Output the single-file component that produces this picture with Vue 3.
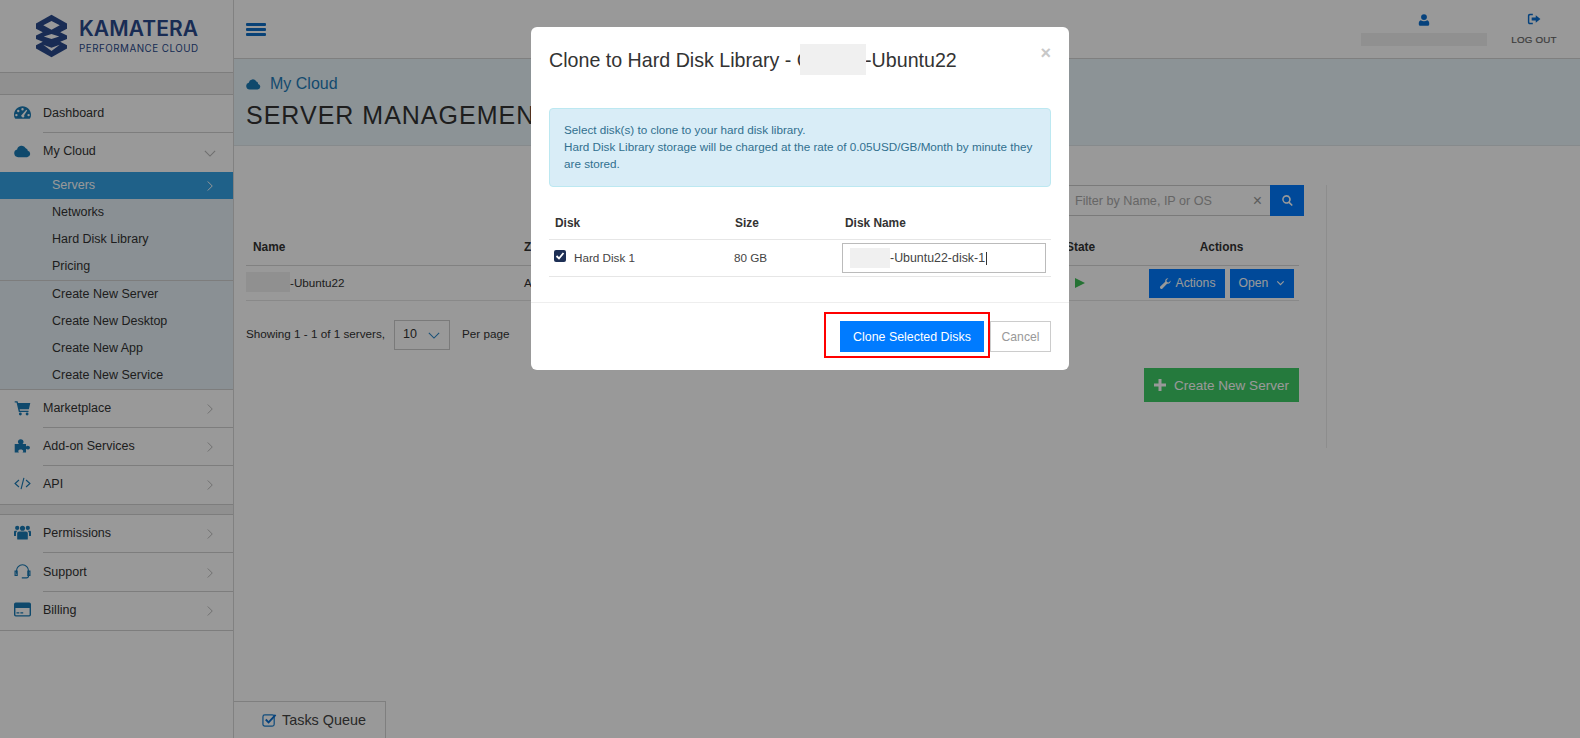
<script setup>
const icons = {
  gauge: 'M12 3C5.400 3 0 8.400 0 15c0 1.900.400 3.600 1.200 5.200.2.400.5.600.9.600h19.800c.4 0 .7-.2.9-.6.8-1.600 1.200-3.300 1.200-5.200C24 8.400 18.600 3 12 3zM12 5.800a1.700 1.700 0 1 1 0 3.400 1.700 1.700 0 0 1 0-3.400zM6 8.200a1.700 1.700 0 1 1 0 3.400 1.700 1.700 0 0 1 0-3.400zM3.400 14a1.700 1.700 0 1 1 0 3.400 1.700 1.700 0 0 1 0-3.400zM20.600 14a1.700 1.700 0 1 1 0 3.400 1.700 1.700 0 0 1 0-3.400zM17.400 8.200l1.300.8-4.400 6.800c.5.800.5 1.700 0 2.400a2.300 2.300 0 1 1-2.900-3.500z',
  cloud: 'M6 20a5.500 5.500 0 0 1-1.600-10.800A6.500 6.500 0 0 1 16.600 7.300 4 4 0 0 1 19.500 11 4.600 4.600 0 0 1 18.500 20z',
  cart: 'M1 3h4l.8 2.500H23l-2 9H8l.4 2h12.100v2H6.800L3.600 5H1zM9 19.200a2 2 0 1 1 0 4 2 2 0 0 1 0-4zM18.500 19.200a2 2 0 1 1 0 4 2 2 0 0 1 0-4z',
  puzzle: 'M1 10h6c-1-1-1.500-2-1.500-3.200C5.500 4.700 7 3 9.500 3S13.500 4.700 13.500 6.800c0 1.200-.5 2.200-1.500 3.200h5v3.500c.8-.7 1.500-1 2.300-1 1.600 0 3.200 1 3.200 2.500s-1.600 2.500-3.200 2.500c-.8 0-1.500-.3-2.300-1V22H12c.7-.8 1-1.500 1-2.300 0-1.200-1.500-2.200-3.500-2.200S6 18.500 6 19.700c0 .8.300 1.500 1 2.300H1z',
  users: 'M12 2.500a3.600 3.600 0 1 1 0 7.200 3.600 3.600 0 0 1 0-7.200zM4.500 2.500a3 3 0 1 1 0 6 3 3 0 0 1 0-6zM19.500 2.500a3 3 0 1 1 0 6 3 3 0 0 1 0-6zM7.300 10.500h9.400c1.800 0 2.800 1.200 2.800 3V21c0 .6-.4 1-1 1H5.500c-.6 0-1-.4-1-1v-7.500c0-1.800 1-3 2.800-3zM0 11.500c0-1 .8-1.800 1.800-1.800h3.400c-1.300.8-2.400 2-2.400 3.800v3.500H.8c-.5 0-.8-.3-.8-.8zM24 11.500c0-1-.8-1.800-1.800-1.800h-3.400c1.300.8 2.400 2 2.400 3.800v3.500h2c.5 0 .8-.3.8-.8z',
  user: 'M12 2a5 5 0 1 1 0 10 5 5 0 0 1 0-10zM6.500 12.500c1.500 1.200 3.500 1.800 5.500 1.800s4-.6 5.500-1.800c2.500.5 3.500 3 3.500 6.200 0 2-1.200 3.300-3.200 3.300H6.200C4.200 22 3 20.700 3 18.700c0-3.200 1-5.700 3.500-6.200z',
  logout: 'M10 3v2.500H5.500c-1 0-1.500.6-1.500 1.500v10c0 .9.500 1.500 1.500 1.500H10V21H5C2.800 21 1.500 19.700 1.500 17.500v-11C1.500 4.300 2.800 3 5 3zM15 5.500l8 6.500-8 6.500v-4H8v-5h7z',
  wrench: 'M21.500 6.500c.4 3.500-2.700 6.800-6.600 5.800L6.500 21c-1.200 1.200-3 1.200-4 .2-1-1-1-2.700.2-3.900l8.800-8.400C10.600 5 13.800 1.900 17.300 2.300l-3.500 3.500.7 3.500 3.500.7z',
  search: 'M10 2a8 8 0 0 1 6.400 12.800l5.400 5.400-2.100 2.100-5.400-5.400A8 8 0 1 1 10 2zm0 3a5 5 0 1 0 0 10 5 5 0 0 0 0-10z'
}
const subA = ['Servers', 'Networks', 'Hard Disk Library', 'Pricing']
const subB = ['Create New Server', 'Create New Desktop', 'Create New App', 'Create New Service']
const blockB = [
  { label: 'Marketplace', icon: 'cart' },
  { label: 'Add-on Services', icon: 'puzzle' },
  { label: 'API', icon: 'code' }
]
const blockC = [
  { label: 'Permissions', icon: 'users' },
  { label: 'Support', icon: 'headset' },
  { label: 'Billing', icon: 'card' }
]
</script>

<template>
  <div class="page">
    <aside class="sidebar">
      <div class="logo">
        <svg class="logo-mark" viewBox="0 0 32 44">
          <path class="hex" d="M16 0 32 9v26L16 44 0 35V9z" />
          <path class="gap" d="M16 6.500 24.500 11 16 15.500 7.500 11zM8 22.500 16 20l8 2.500-8 2.500zM7.500 31 16 34l8.500-3L16 37.500zM0 14.500 7 18l-7 3.500zM32 14.500 25 18l7 3.500zM0 25 7 28l-7 3.500zM32 25l-7 3 7 3.500z" />
        </svg>
        <div class="logo-text">
          <div class="logo-name">KAMATERA</div>
          <div class="logo-sub">PERFORMANCE CLOUD</div>
        </div>
      </div>
      <div class="side-gap"></div>

      <a class="item lined">
        <svg class="ico" viewBox="0 0 24 24"><path fill-rule="evenodd" :d="icons.gauge" /></svg>
        <span>Dashboard</span>
      </a>
      <a class="item open">
        <svg class="ico" viewBox="0 0 24 24"><path :d="icons.cloud" /></svg>
        <span>My Cloud</span>
        <svg class="chev down" viewBox="0 0 14 8"><path d="M1 1l6 6 6-6" /></svg>
      </a>
      <div class="sub">
        <a v-for="(s, i) in subA" :key="s" class="sub-item" :class="{ active: i === 0 }">
          {{ s }}
          <svg v-if="i === 0" class="chev light" viewBox="0 0 8 14"><path d="M1 1l6 6-6 6" /></svg>
        </a>
      </div>
      <div class="sub">
        <a v-for="s in subB" :key="s" class="sub-item">{{ s }}</a>
      </div>

      <a v-for="(m, i) in blockB" :key="m.label" class="item" :class="{ lined: i < 2, 'last-a': i === 2 }">
        <svg v-if="m.icon === 'code'" class="ico stroke" viewBox="0 0 24 24"><path d="M7 7l-5.500 5L7 17M17 7l5.500 5L17 17M14 4l-4 16" /></svg>
        <svg v-else class="ico" viewBox="0 0 24 24"><path :d="icons[m.icon]" /></svg>
        <span>{{ m.label }}</span>
        <svg class="chev" viewBox="0 0 8 14"><path d="M1 1l6 6-6 6" /></svg>
      </a>
      <div class="side-gap small"></div>
      <a v-for="(m, i) in blockC" :key="m.label" class="item" :class="{ lined: i < 2, 'last-a': i === 2, tall: i === 1 }">
        <svg v-if="m.icon === 'headset'" class="ico stroke" viewBox="0 0 24 24"><path d="M3.500 15V11a8.500 8.500 0 0 1 17 0v7a3 3 0 0 1-3 3H11M1.500 11.500h3v6h-3zM19.500 11.500h3v6h-3z" /></svg>
        <svg v-else-if="m.icon === 'card'" class="ico" viewBox="0 0 24 24"><path fill-rule="evenodd" d="M2.500 2h19A2.500 2.500 0 0 1 24 4.500v15a2.500 2.500 0 0 1-2.500 2.500h-19A2.500 2.500 0 0 1 0 19.500v-15A2.500 2.500 0 0 1 2.500 2zM2 10v9.500c0 .3.200.5.500.5h19c.3 0 .5-.2.5-.5V10zM3.500 16h4v1.500h-4zM9 16h4v1.500H9z" /></svg>
        <svg v-else class="ico" viewBox="0 0 24 24"><path :d="icons[m.icon]" /></svg>
        <span>{{ m.label }}</span>
        <svg class="chev" viewBox="0 0 8 14"><path d="M1 1l6 6-6 6" /></svg>
      </a>
    </aside>

    <main class="main">
      <header class="topbar">
        <div class="burger"><i></i><i></i><i></i></div>
        <div class="top-right">
          <div class="account">
            <svg class="top-ico" viewBox="0 0 24 24"><path :d="icons.user" /></svg>
            <span class="blur account-blur"></span>
          </div>
          <div class="logout">
            <svg class="top-ico" viewBox="0 0 24 24"><path :d="icons.logout" /></svg>
            <span>LOG OUT</span>
          </div>
        </div>
      </header>

      <section class="band">
        <div class="crumb">
          <svg viewBox="0 0 24 24"><path :d="icons.cloud" /></svg>
          <span>My Cloud</span>
        </div>
        <h1>SERVER MANAGEMENT</h1>
      </section>

      <section class="workspace">
        <div class="toolbar">
          <div class="filter">
            <span class="placeholder">Filter by Name, IP or OS</span>
            <span class="clear">×</span>
          </div>
          <button class="search-btn">
            <svg viewBox="0 0 24 24"><path :d="icons.search" /></svg>
          </button>
        </div>

        <div class="grid head">
          <div class="c-name">Name</div>
          <div class="c-zone">Zone</div>
          <div class="c-state">State</div>
          <div class="c-actions center">Actions</div>
        </div>
        <div class="grid row">
          <div class="c-name plain"><span class="blur name-blur"></span>-Ubuntu22</div>
          <div class="c-zone plain">AS</div>
          <div class="c-state"><i class="play"></i></div>
          <div class="c-actions btns">
            <button class="btn-blue act">
              <svg viewBox="0 0 24 24"><path :d="icons.wrench" /></svg>
              Actions
            </button>
            <button class="btn-blue opn">
              Open
              <svg viewBox="0 0 14 8"><path d="M2 1.500l5 5 5-5" /></svg>
            </button>
          </div>
        </div>

        <div class="pager">
          <span>Showing 1 - 1 of 1 servers,</span>
          <div class="per">
            <span>10</span>
            <svg viewBox="0 0 14 8"><path d="M1 1l6 6 6-6" /></svg>
          </div>
          <span>Per page</span>
        </div>

        <div class="create-row">
          <button class="create">
            <svg viewBox="0 0 12 12"><path d="M4.500 0h3v4.500H12v3H7.500V12h-3V7.500H0v-3h4.500z" /></svg>
            Create New Server
          </button>
        </div>
      </section>

      <div class="tasks">
        <svg viewBox="0 0 16 16">
          <rect x="1" y="3" width="12" height="12" rx="2" class="tbox" />
          <path d="M4 8l3 3 7.500-8" class="tcheck" />
        </svg>
        <span>Tasks Queue</span>
      </div>
    </main>

    <div class="backdrop"></div>

    <div class="modal">
      <div class="modal-head">
        <h2>Clone to Hard Disk Library - G<span class="blur title-blur"></span>-Ubuntu22</h2>
        <span class="close">×</span>
      </div>
      <div class="modal-body">
        <div class="alert">
          Select disk(s) to clone to your hard disk library.<br />
          Hard Disk Library storage will be charged at the rate of 0.05USD/GB/Month by minute they are stored.
        </div>
        <div class="d-grid d-head">
          <div>Disk</div>
          <div>Size</div>
          <div>Disk Name</div>
        </div>
        <div class="d-grid d-row">
          <div class="d-disk">
            <span class="check">
              <svg viewBox="0 0 12 12"><path d="M2.500 6l2.500 2.500 4.500-5.500" /></svg>
            </span>
            Hard Disk 1
          </div>
          <div class="d-size">80 GB</div>
          <div class="d-input"><span class="blur input-blur"></span>-Ubuntu22-disk-1<i class="caret"></i></div>
        </div>
      </div>
      <div class="modal-foot">
        <div class="highlight">
          <button class="clone">Clone Selected Disks</button>
        </div>
        <button class="cancel">Cancel</button>
      </div>
    </div>
  </div>
</template>

<style>
html, body { margin: 0; background: #fff; overflow: hidden; }
</style>

<style scoped>
.page {
  display: flex;
  width: 1580px;
  height: 738px;
  overflow: hidden;
  position: relative;
  font-family: "Liberation Sans", Arial, sans-serif;
  font-size: 12.5px;
  color: #333;
  background: #fff;
}
button { font-family: inherit; cursor: pointer; }

/* sidebar */
.sidebar {
  width: 233px;
  flex: none;
  border-right: 1px solid #d8d8d8;
  display: flex;
  flex-direction: column;
  box-sizing: content-box;
}
.logo {
  height: 73px;
  border-bottom: 1px solid #d0d0d0;
  display: flex;
  align-items: flex-start;
  padding: 14px 0 0 36px;
  box-sizing: border-box;
  flex: none;
}
.logo-mark { width: 31px; height: 44px; flex: none; }
.hex { fill: #2a4a8c; }
.gap { fill: #fff; }
.logo-text { margin-left: 12px; padding-top: 5px; color: #2a4a8c; }
.logo-name { font-family: Inter, sans-serif; font-weight: 600; font-size: 21px; line-height: 20px; letter-spacing: .1px; white-space: nowrap; }
.logo-sub { font-family: Inter, sans-serif; font-size: 9.800px; line-height: 11px; margin-top: 4px; letter-spacing: .5px; white-space: nowrap; }
.side-gap { height: 22px; flex: none; box-sizing: border-box; background: #f0f0f0; border-bottom: 1px solid #d0d0d0; }
.side-gap.small { height: 10px; }
.item {
  height: 38px;
  flex: none;
  display: flex;
  align-items: center;
  padding: 0 0 2px 43px;
  position: relative;
  box-sizing: border-box;
}
.item.lined::after {
  content: "";
  position: absolute;
  left: 43px;
  right: 0;
  bottom: 0;
  height: 1px;
  background: #d0d0d0;
}
.item.open { height: 39px; padding-bottom: 4px; }
.item.tall { height: 39px; }
.item.last-a { border-bottom: 1px solid #d0d0d0; height: 39px; }
.item .ico {
  position: absolute;
  left: 13.500px;
  top: 50%;
  width: 17px;
  height: 17px;
  margin-top: -10px;
  fill: #197ab5;
}
.ico.stroke { fill: none; stroke: #197ab5; stroke-width: 1.600; }
.chev {
  position: absolute;
  right: 20px;
  top: 50%;
  width: 6px;
  height: 12px;
  margin-top: -6px;
  fill: none;
  stroke: #b8b8b8;
  stroke-width: 1.300;
}
.chev.down { width: 12px; height: 7px; right: 17px; margin-top: -3px; }
.chev.light { stroke: #fff; right: 20px; }
.sub { background: #e7f1f7; height: 109px; flex: none; box-sizing: border-box; border-bottom: 1px solid #d0d0d0; }
.sub-item {
  display: block;
  height: 27px;
  line-height: 26px;
  padding-left: 52px;
  position: relative;
}
.sub-item.active { background: #34a2e4; color: #fff; }

/* main column */
.main {
  flex: 1;
  min-width: 0;
  display: flex;
  flex-direction: column;
  height: 738px;
}
.topbar {
  height: 59px;
  flex: none;
  border-bottom: 1px solid #d4d4d4;
  box-sizing: border-box;
  display: flex;
  justify-content: space-between;
  padding-left: 12px;
}
.burger { width: 20px; padding-top: 23px; }
.burger i { display: block; height: 3px; background: #0f6fc6; margin-bottom: 2px; border-radius: 1px; }
.top-right { display: flex; }
.account {
  width: 126px;
  display: flex;
  flex-direction: column;
  align-items: center;
  padding-top: 13px;
  margin-right: 24px;
}
.top-ico { width: 14px; height: 14px; fill: #0a6fd0; display: block; }
.account-blur { display: block; width: 126px; height: 13px; margin-top: 6px; }
.logout {
  width: 46px;
  margin-right: 23px;
  display: flex;
  flex-direction: column;
  align-items: center;
  padding-top: 12px;
  font-size: 9.800px;
  letter-spacing: .2px;
  color: #666;
  -webkit-text-stroke: .2px #666;
}
.logout span { margin-top: 8px; white-space: nowrap; }
.band {
  height: 87px;
  flex: none;
  background: #e9f5fb;
  border-bottom: 1px solid #dfe6ea;
  box-sizing: border-box;
  padding: 15px 0 0 12px;
}
.crumb { display: flex; align-items: center; font-size: 16px; color: #1f7cb8; line-height: 20px; }
.crumb svg { width: 15px; height: 15px; fill: #197ab5; margin-right: 9px; }
.band h1 {
  margin: 4px 0 0;
  font-size: 25px;
  font-weight: 400;
  line-height: 34px;
  letter-spacing: 1px;
  color: #333;
  white-space: nowrap;
}

/* workspace */
.workspace {
  width: 1093px;
  box-sizing: border-box;
  height: 263px;
  flex: none;
  margin-top: 39px;
  padding-left: 12px;
  border-right: 1px solid #ececec;
  font-size: 11.700px;
}
.toolbar { display: flex; justify-content: flex-end; height: 31px; padding-right: 22px; }
.filter {
  width: 240px;
  box-sizing: border-box;
  border: 1px solid #ccc;
  border-right: none;
  display: flex;
  align-items: center;
  justify-content: space-between;
  padding: 0 8px 0 35px;
  color: #aaa;
}
.placeholder { font-size: 12.600px; padding-left: 9px; white-space: nowrap; }
.clear { font-size: 16px; color: #999; }
.search-btn {
  width: 34px;
  border: none;
  background: #007bff;
  padding: 0;
  display: flex;
  align-items: center;
  justify-content: center;
}
.search-btn svg { width: 13px; height: 13px; fill: #fff; }
.grid {
  display: grid;
  grid-template-columns: 278px 542px 78px 155px;
  width: 1053px;
  align-items: center;
}
.head {
  margin-top: 15px;
  height: 35px;
  border-bottom: 1px solid #d8d8d8;
  font-weight: 700;
  font-size: 11.900px;
  padding-bottom: 2px;
  box-sizing: border-box;
}
.head .c-name { padding-left: 7px; }
.center { text-align: center; }
.row { height: 35px; border-bottom: 1px solid #e4e4e4; box-sizing: border-box; }
.plain { display: flex; align-items: center; padding-bottom: 2px; }
.name-blur { width: 44px; height: 20px; }
.play {
  display: block;
  margin-left: 9px;
  width: 0;
  height: 0;
  border-left: 10px solid #3fbf57;
  border-top: 5.500px solid transparent;
  border-bottom: 5.500px solid transparent;
}
.btns { display: flex; justify-content: flex-end; padding-right: 5px; gap: 5px; }
.btn-blue {
  height: 29px;
  border: none;
  background: #007bff;
  color: #fff;
  font-size: 12.200px;
  padding: 0;
  display: flex;
  align-items: center;
  justify-content: center;
}
.act { width: 76px; }
.act svg { width: 13px; height: 13px; fill: #fff; margin-right: 4px; }
.opn { width: 64px; }
.opn svg { width: 9px; height: 6px; fill: none; stroke: #fff; stroke-width: 1.800; margin-left: 8px; }
.pager { display: flex; align-items: center; margin-top: 19px; }
.pager > span { margin-top: -3px; }
.per {
  width: 56px;
  height: 30px;
  box-sizing: border-box;
  border: 1px solid #ccc;
  margin: 0 12px 0 9px;
  display: flex;
  align-items: center;
  justify-content: space-between;
  padding: 0 9px 2px 8px;
  font-size: 12.500px;
}
.per svg { width: 12px; height: 7px; fill: none; stroke: #2b87c8; stroke-width: 1.300; margin-top: 3px; }
.create-row { width: 1053px; display: flex; justify-content: flex-end; margin-top: 18px; }
.create {
  width: 155px;
  height: 34px;
  border: none;
  background: #3fcb66;
  color: #fff;
  font-size: 13.500px;
  display: flex;
  align-items: center;
  justify-content: center;
  padding: 0;
}
.create svg { width: 12px; height: 12px; fill: #fff; margin-right: 8px; }
.tasks {
  margin-top: auto;
  width: 152px;
  height: 37px;
  box-sizing: border-box;
  border-top: 1px solid #d4d4d4;
  border-right: 1px solid #d4d4d4;
  display: flex;
  align-items: center;
  padding-left: 28px;
  font-size: 14.400px;
  color: #444;
}
.tasks svg { width: 15px; height: 15px; margin: -2px 5px 0 0; flex: none; }
.tbox { fill: none; stroke: #1c7fd0; stroke-width: 1.300; }
.tcheck { fill: none; stroke: #0a6fd0; stroke-width: 2; }

/* overlay + dialog */
.backdrop { position: absolute; inset: 0; background: rgba(0, 0, 0, .4); }
.modal {
  position: absolute;
  left: 531px;
  top: 27px;
  width: 538px;
  height: 343px;
  background: #fff;
  border-radius: 6px;
  box-sizing: border-box;
  display: flex;
  flex-direction: column;
}
.modal-head { height: 81px; padding: 0 18px; box-sizing: border-box; position: relative; }
.modal-head h2 {
  margin: 0;
  padding-top: 20px;
  font-size: 19.650px;
  line-height: 26px;
  font-weight: 400;
  color: #333;
  white-space: nowrap;
  display: flex;
}
.title-blur { width: 66px; height: 31px; margin: -3px -1px 0 -12px; position: relative; z-index: 1; }
.close {
  position: absolute;
  right: 18px;
  top: 16px;
  font-size: 18px;
  line-height: 20px;
  font-weight: 700;
  color: #c8c8c8;
}
.modal-body { padding: 0 18px; height: 194px; box-sizing: border-box; }
.alert {
  height: 79px;
  box-sizing: border-box;
  border: 1px solid #bce8f1;
  border-radius: 4px;
  background: #d9edf7;
  color: #31708f;
  padding: 12px 14px;
  font-size: 11.700px;
  line-height: 17px;
}
.d-grid { display: grid; grid-template-columns: 180px 110px 1fr; align-items: center; }
.d-head {
  margin-top: 18px;
  height: 35px;
  padding: 1px 0 0 6px;
  border-bottom: 1px solid #e6e6e6;
  font-size: 11.900px;
  font-weight: 700;
  box-sizing: border-box;
}
.d-row { height: 37px; border-bottom: 1px solid #e6e6e6; box-sizing: border-box; padding-left: 6px; color: #444; font-size: 11.700px; }
.d-disk { display: flex; align-items: center; margin-top: -2px; }
.check {
  width: 12px;
  height: 12px;
  border-radius: 2px;
  background: #1d2f55;
  margin: -2px 8px 0 -1px;
  display: block;
}
.check svg { display: block; width: 12px; height: 12px; fill: none; stroke: #fff; stroke-width: 1.800; }
.d-size { margin: -2px 0 0 -1px; }
.d-input {
  margin-left: -3px;
  width: 204px;
  height: 30px;
  box-sizing: border-box;
  border: 1px solid #bbb;
  display: flex;
  align-items: center;
  padding-left: 7px;
  font-size: 12.400px;
}
.input-blur { width: 40px; height: 20px; background: #eee; }
.caret { display: block; width: 1px; height: 13px; background: #333; margin-left: 1px; }
.modal-foot {
  flex: 1;
  border-top: 1px solid #eee;
  display: flex;
  justify-content: flex-end;
  align-items: flex-start;
  padding: 13px 18px 0 0;
  box-sizing: border-box;
}
.highlight {
  border: 2px solid #f00;
  padding: 4px 4px 3px 14px;
  height: 46px;
  box-sizing: border-box;
  margin-top: -4px;
}
.clone {
  display: block;
  width: 144px;
  height: 31px;
  border: none;
  background: #007bff;
  color: #fff;
  font-size: 12.400px;
  padding: 0;
  margin-top: 3px;
}
.cancel {
  width: 61px;
  height: 31px;
  margin-top: 5px;
  border: 1px solid #ccc;
  background: #fff;
  color: #999;
  font-size: 12.200px;
  padding: 0;
}
.blur { background: #f0f0f0; display: inline-block; flex: none; }
</style>
